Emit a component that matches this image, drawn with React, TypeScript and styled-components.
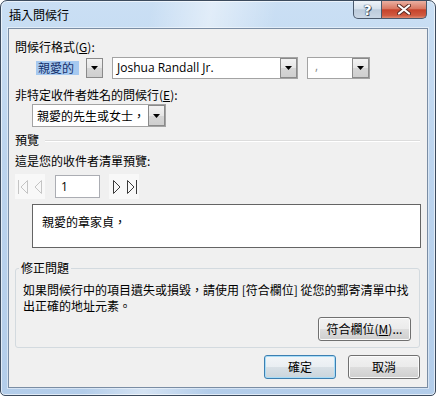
import React from "react";
import styled, { createGlobalStyle, css } from "styled-components";

const Global = createGlobalStyle`
  html, body { margin: 0; padding: 0; background: #ffffff; }
  body { font-family: "Noto Sans CJK TC", "Open Sans", sans-serif; font-size: 12px; color: #000; }
  * { box-sizing: border-box; }
`;

const Frame = styled.div`
  width: 436px;
  height: 396px;
  border: 1px solid #3c4b5e;
  border-radius: 7px 7px 5px 5px;
  background:
    linear-gradient(100deg, rgba(255,255,255,0) 30%, rgba(255,255,255,0.45) 42%, rgba(255,255,255,0) 55%),
    linear-gradient(180deg, #cadff4 0%, #bcd4ee 40%, #b3cdea 100%);
  box-shadow: inset 0 0 0 1px rgba(255,255,255,0.6);
  padding: 0 7px 7px 7px;
  display: flex;
  flex-direction: column;
`;

const TitleBar = styled.div`
  height: 27px;
  display: flex;
  justify-content: space-between;
  align-items: flex-start;
`;

const Title = styled.div`
  margin: 6px 0 0 1px;
  font-size: 12px;
  line-height: 16px;
  color: #000;
`;

const Caption = styled.div`
  display: flex;
  margin-right: 1px;
`;

const CapButton = styled.div<{ $kind: "help" | "close" }>`
  height: 18px;
  border: 1px solid #4a596c;
  border-top: none;
  display: flex;
  align-items: center;
  justify-content: center;
  ${(p) =>
    p.$kind === "help"
      ? css`
          width: 29px;
          border-radius: 0 0 0 5px;
          background: linear-gradient(180deg, #eef3f9 0%, #d6e1ec 45%, #bccbdb 52%, #cad7e5 100%);
        `
      : css`
          width: 45px;
          border-left: none;
          border-radius: 0 0 5px 0;
          background: linear-gradient(180deg, #eab0a2 0%, #d97862 45%, #c6432b 52%, #d05a40 85%, #de8a72 100%);
        `}
`;

const HelpGlyph = styled.span`
  font-family: "DejaVu Sans", sans-serif;
  font-weight: bold;
  font-size: 14px;
  line-height: 14px;
  color: #ffffff;
  text-shadow: 0 0 1px #2c3a4c, 0 0 1px #2c3a4c, 1px 1px 0 #4a596c;
`;

const Client = styled.div`
  flex: 1;
  background: #f0f0f0;
  border: 1px solid #7a8da4;
  box-shadow: 0 0 0 1px rgba(255,255,255,0.45);
  display: flex;
  flex-direction: column;
  padding: 10px 7px 0 6px;
`;

const Label = styled.div<{ $mt?: number; $ml?: number }>`
  height: 16px;
  line-height: 16px;
  font-size: 12px;
  white-space: nowrap;
  margin-top: ${(p) => p.$mt ?? 0}px;
  margin-left: ${(p) => p.$ml ?? 0}px;
  u { text-decoration: underline; text-underline-offset: 1px; }
`;

const Row = styled.div<{ $mt: number; $ml: number; $h: number }>`
  display: flex;
  align-items: center;
  margin-top: ${(p) => p.$mt}px;
  margin-left: ${(p) => p.$ml}px;
  height: ${(p) => p.$h}px;
`;

const Combo = styled.div<{ $w: number; $bare?: boolean; $ml?: number }>`
  width: ${(p) => p.$w}px;
  height: 100%;
  margin-left: ${(p) => p.$ml ?? 0}px;
  display: flex;
  align-items: stretch;
  background: ${(p) => (p.$bare ? "transparent" : "#ffffff")};
  border: 1px solid ${(p) => (p.$bare ? "transparent" : "#a3a3a3")};
`;

const ComboText = styled.div<{ $latin?: boolean; $faint?: boolean }>`
  flex: 1;
  display: flex;
  align-items: ${(p) => (p.$faint ? "flex-start" : "center")};
  padding-left: ${(p) => (p.$faint ? 7 : 4)}px;
  line-height: 16px;
  font-size: 12px;
  white-space: nowrap;
  overflow: hidden;
  color: ${(p) => (p.$faint ? "#8a8a8a" : "#000")};
  font-family: ${(p) => (p.$latin ? '"Open Sans", "Noto Sans CJK TC", sans-serif' : '"Noto Sans CJK TC", sans-serif')};
`;

const Selected = styled.span`
  background: #a6c9f0;
  color: #15306b;
  padding: 0 5px 0 2px;
  line-height: 14px;
  margin-left: -3px;
`;

const DropButton = styled.div`
  width: 17px;
  border: 1px solid #8a8a8a;
  background: linear-gradient(180deg, #f2f2f2 0%, #e6e6e6 50%, #d6d6d6 51%, #cfcfcf 100%);
  display: flex;
  align-items: center;
  justify-content: center;
`;

const Arrow = () => (
  <svg width="7" height="4" viewBox="0 0 7 4">
    <polygon points="0,0 7,0 3.5,4" fill="#000" />
  </svg>
);

const SectionHead = styled.div`
  display: flex;
  align-items: center;
  margin-top: 5px;
  height: 16px;
`;

const Rule = styled.div`
  flex: 1;
  height: 1px;
  margin-left: 6px;
  background: #dcdcdc;
  box-shadow: 0 1px 0 #ffffff;
`;

const NavRow = styled.div`
  display: flex;
  align-items: center;
  margin-top: 6px;
  height: 23px;
`;

const NavGroup = styled.div`
  display: flex;
  align-items: center;
  gap: 2px;
  height: 25px;
  padding: 0 1px;
  background: #f8f8f8;
`;

const NavIcon = styled.div`
  width: 13px;
  height: 18px;
  display: flex;
  align-items: center;
  justify-content: center;
`;

const NumBox = styled.div`
  width: 45px;
  height: 23px;
  margin: 0 9px 0 10px;
  border: 1px solid #abadb3;
  background: #ffffff;
  display: flex;
  align-items: center;
  padding-left: 5px;
  font-family: "Open Sans", sans-serif;
  font-size: 12px;
`;

const PreviewBox = styled.div`
  margin: 6px -1px 0 17px;
  height: 44px;
  border: 1px solid #646464;
  background: #ffffff;
  padding: 9px 0 0 9px;
  font-size: 12px;
  line-height: 16px;
`;

const Group = styled.fieldset`
  margin: 12px 0 0 0;
  padding: 0 8px 6px 7px;
  border: 1px solid #d3dadf;
  border-radius: 3px;
  display: flex;
  flex-direction: column;
  min-width: 0;
`;

const Legend = styled.legend`
  padding: 0 2px;
  margin-left: -4px;
  font-size: 12px;
  line-height: 16px;
`;

const Para = styled.div`
  margin-top: 6px;
  font-size: 12px;
  line-height: 16px;
  white-space: nowrap;
`;

const BtnRow = styled.div<{ $mt: number; $gap?: number }>`
  display: flex;
  justify-content: flex-end;
  gap: ${(p) => p.$gap ?? 0}px;
  margin-top: ${(p) => p.$mt}px;
`;

const Button = styled.div<{ $w: number; $default?: boolean }>`
  width: ${(p) => p.$w}px;
  height: 24px;
  border: 1px solid ${(p) => (p.$default ? "#3c7fb1" : "#707070")};
  border-radius: 3px;
  background: ${(p) =>
    p.$default
      ? "linear-gradient(180deg, #f2f5f8 0%, #e9eef2 50%, #d8e0e6 51%, #cbd5dc 100%)"
      : "linear-gradient(180deg, #f2f2f2 0%, #ebebeb 50%, #dddddd 51%, #cfcfcf 100%)"};
  box-shadow: inset 0 0 0 1px ${(p) => (p.$default ? "#a8dcf7" : "#fbfbfb")};
  display: flex;
  align-items: center;
  justify-content: center;
  font-size: 12px;
  line-height: 16px;
  u { text-decoration: underline; text-underline-offset: 1px; }
`;

const TriLeft = ({ bar, color }: { bar?: boolean; color: string }) => (
  <svg width="12" height="16" viewBox="0 0 12 16">
    {bar && <line x1="1.5" y1="1" x2="1.5" y2="15" stroke={color} strokeWidth="1" />}
    <polygon points={bar ? "10.5,1.5 4,8 10.5,14.5" : "9.5,1.5 3,8 9.5,14.5"} fill="none" stroke={color} strokeWidth="1" />
  </svg>
);

const TriRight = ({ bar, color }: { bar?: boolean; color: string }) => (
  <svg width="12" height="16" viewBox="0 0 12 16">
    <polygon points={bar ? "1.5,1.5 8,8 1.5,14.5" : "2.5,1.5 9,8 2.5,14.5"} fill="none" stroke={color} strokeWidth="1" />
    {bar && <line x1="10.5" y1="1" x2="10.5" y2="15" stroke={color} strokeWidth="1" />}
  </svg>
);

export default function App() {
  return (
    <>
      <Global />
      <Frame>
        <TitleBar>
          <Title>插入問候行</Title>
          <Caption>
            <CapButton $kind="help">
              <HelpGlyph>?</HelpGlyph>
            </CapButton>
            <CapButton $kind="close">
              <svg width="14" height="11" viewBox="0 0 14 11">
                <path d="M2 1.5 L12 9.5 M12 1.5 L2 9.5" stroke="#5a2a22" strokeWidth="4" strokeLinecap="round" />
                <path d="M2 1.5 L12 9.5 M12 1.5 L2 9.5" stroke="#ffffff" strokeWidth="2.2" strokeLinecap="round" />
              </svg>
            </CapButton>
          </Caption>
        </TitleBar>
        <Client>
          <Label>
            問候行格式(<u>G</u>):
          </Label>
          <Row $mt={2} $ml={19} $h={22}>
            <Combo $w={70} $bare>
              <ComboText>
                <Selected>親愛的</Selected>
              </ComboText>
              <DropButton>
                <Arrow />
              </DropButton>
            </Combo>
            <Combo $w={186} $ml={8}>
              <ComboText $latin>Joshua Randall Jr.</ComboText>
              <DropButton>
                <Arrow />
              </DropButton>
            </Combo>
            <Combo $w={63} $ml={9}>
              <ComboText $latin $faint>
                ,
              </ComboText>
              <DropButton>
                <Arrow />
              </DropButton>
            </Combo>
          </Row>
          <Label $mt={8}>
            非特定收件者姓名的問候行(<u>E</u>):
          </Label>
          <Row $mt={1} $ml={17} $h={23}>
            <Combo $w={134}>
              <ComboText>親愛的先生或女士，</ComboText>
              <DropButton>
                <Arrow />
              </DropButton>
            </Combo>
          </Row>
          <SectionHead>
            <Label>預覽</Label>
            <Rule />
          </SectionHead>
          <Label $mt={5}>這是您的收件者清單預覽:</Label>
          <NavRow>
            <NavGroup>
              <NavIcon>
                <TriLeft bar color="#c4c4c4" />
              </NavIcon>
              <NavIcon>
                <TriLeft color="#c4c4c4" />
              </NavIcon>
            </NavGroup>
            <NumBox>1</NumBox>
            <NavGroup>
              <NavIcon>
                <TriRight color="#3a3a3a" />
              </NavIcon>
              <NavIcon>
                <TriRight bar color="#3a3a3a" />
              </NavIcon>
            </NavGroup>
          </NavRow>
          <PreviewBox>親愛的章家貞，</PreviewBox>
          <Group>
            <Legend>修正問題</Legend>
            <Para>
              如果問候行中的項目遺失或損毀，請使用 [符合欄位] 從您的郵寄清單中找
              <br />
              出正確的地址元素。
            </Para>
            <BtnRow $mt={3}>
              <Button $w={93}>
                符合欄位(<u>M</u>)...
              </Button>
            </BtnRow>
          </Group>
          <BtnRow $mt={7} $gap={12}>
            <Button $w={72} $default>
              確定
            </Button>
            <Button $w={72}>取消</Button>
          </BtnRow>
        </Client>
      </Frame>
    </>
  );
}
